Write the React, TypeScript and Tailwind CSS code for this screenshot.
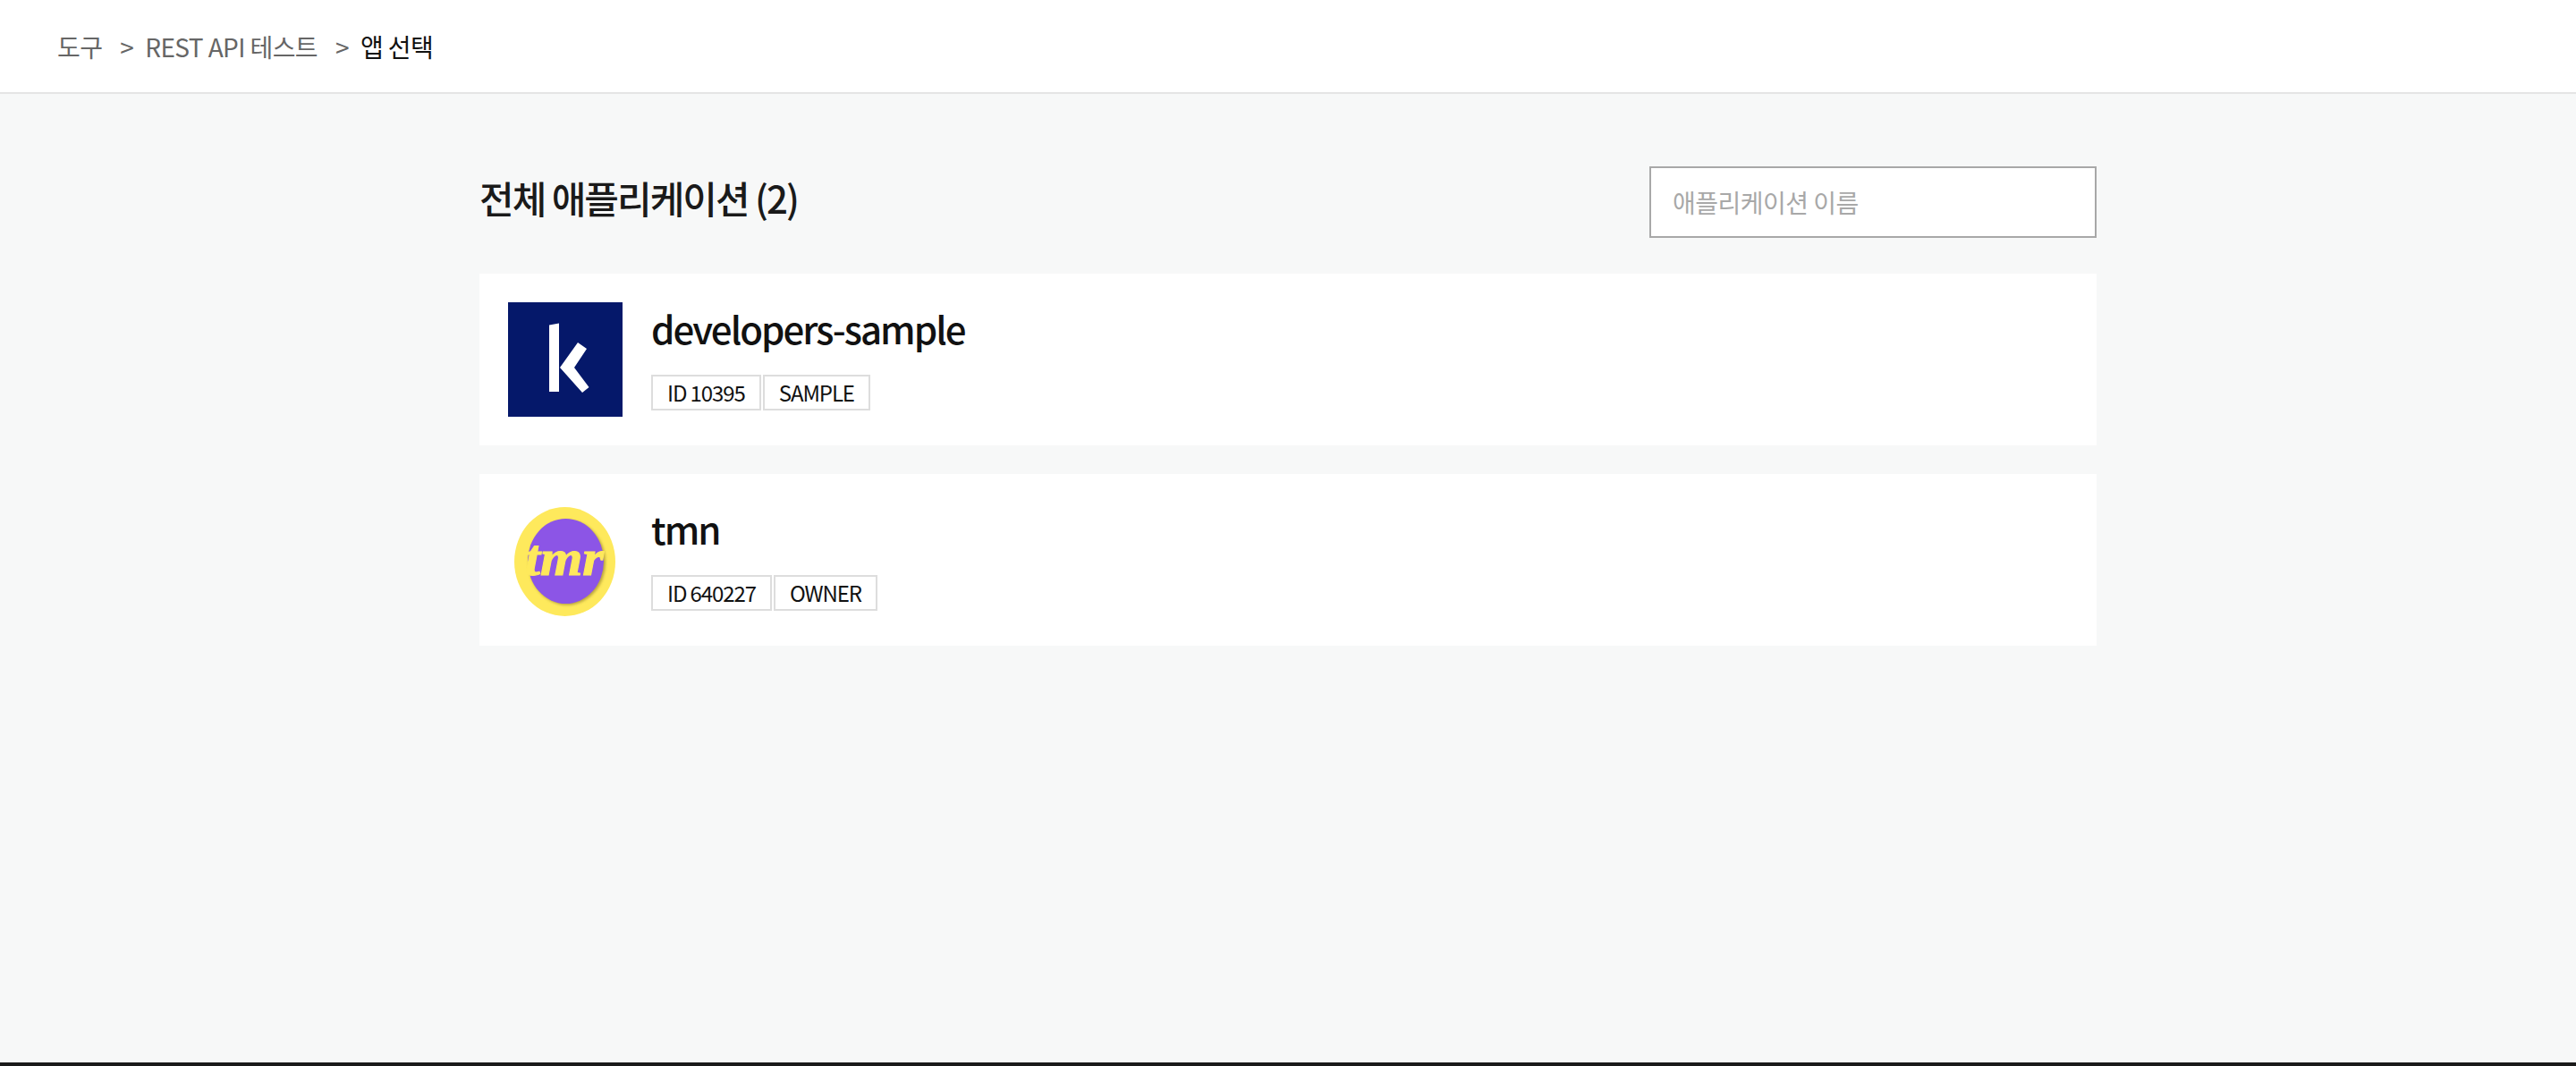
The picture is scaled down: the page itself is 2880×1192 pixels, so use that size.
const apps = [
  { name: 'developers-sample', id: 'ID 10395', role: 'SAMPLE', logo: 'k' },
  { name: 'tmn', id: 'ID 640227', role: 'OWNER', logo: 'tmr' },
];

const KLogo = () => (
  <svg viewBox="0 0 128 128" className="h-32 w-32 shrink-0">
    <rect width="128" height="128" fill="#05186a" />
    <path d="M46 25.500 L57 23.500 V100 H46 Z" fill="#fff" />
    <path d="M78 45 L88 52 L74 73 L90.500 95 L83 101 L58 73 Z" fill="#fff" />
  </svg>
);

const TmrLogo = () => (
  <svg viewBox="0 0 128 128" className="h-32 w-32 shrink-0">
    <defs>
      <filter id="blur-shadow" x="-20%" y="-20%" width="140%" height="140%">
        <feGaussianBlur stdDeviation="1.500" />
      </filter>
    </defs>
    <ellipse cx="63.500" cy="66" rx="56.500" ry="61" fill="#fee95c" />
    <ellipse cx="66" cy="67" rx="43" ry="47.500" fill="#8f7a2c" opacity="0.6" filter="url(#blur-shadow)" />
    <ellipse cx="64.500" cy="65.500" rx="42.500" ry="47.500" fill="#8c55e6" />
    <text
      x="19"
      y="81"
      textLength="88"
      lengthAdjust="spacingAndGlyphs"
      fill="#fee95c"
      fontFamily="'Liberation Serif', serif"
      fontStyle="italic"
      fontWeight="700"
      fontSize="56"
      stroke="#fee95c"
      strokeWidth="1"
    >
      tmr
    </text>
  </svg>
);

const App = () => {
  return (
    <div className="flex min-h-screen flex-col bg-[#f7f8f8] font-['Noto_Sans_CJK_KR','Noto_Sans',sans-serif] text-[#1a1a1a]">
      <header className="flex h-[105px] items-center border-b-2 border-[#e5e5e5] bg-white pl-16 text-[28px] tracking-[-0.6px] text-[#666]">
        <span>도구</span>
        <span className="mr-[13px] ml-5">&gt;</span>
        <span>REST API 테스트</span>
        <span className="mr-[13px] ml-5">&gt;</span>
        <span className="text-[#111]">앱 선택</span>
      </header>

      <main className="mx-auto w-[1808px] flex-1 pt-[81px]">
        <div className="flex items-start justify-between">
          <h1 className="mt-[3px] text-[42px] leading-[64px] font-medium tracking-[-2px]">전체 애플리케이션 (2)</h1>
          <input
            placeholder="애플리케이션 이름"
            className="h-20 w-[500px] border-2 border-[#a8a8a8] bg-white px-6 text-[28px] tracking-[-0.5px] outline-none placeholder:text-[#a8a8a8]"
          />
        </div>

        <ul className="mt-10 flex flex-col gap-8">
          {apps.map((app) => (
            <li key={app.name} className="flex h-48 items-center gap-8 bg-white p-8">
              {app.logo === 'k' ? <KLogo /> : <TmrLogo />}
              <div className="mb-[10px]">
                <h2 className="text-[42px] leading-[64px] font-medium tracking-[-2px] text-[#111]">{app.name}</h2>
                <div className="mt-5 flex gap-[2px]">
                  <span className="flex h-10 items-center border-2 border-[#ddd] bg-white px-4 text-2xl tracking-[-1.1px] text-[#111]">{app.id}</span>
                  <span className="flex h-10 items-center border-2 border-[#ddd] bg-white px-4 text-2xl tracking-[-1.1px] text-[#111]">{app.role}</span>
                </div>
              </div>
            </li>
          ))}
        </ul>
      </main>

      <div className="h-1 bg-[#1a1a1a]" />
    </div>
  );
};

export default App;
